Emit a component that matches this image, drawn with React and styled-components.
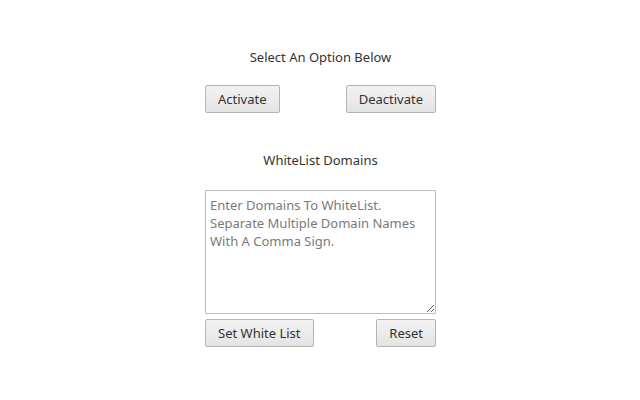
import styled, { createGlobalStyle } from 'styled-components'

const Global = createGlobalStyle`
  html, body {
    margin: 0;
    padding: 0;
    background: #fff;
  }
  body {
    font-family: "Noto Sans", "Open Sans", sans-serif;
    color: #222;
  }
`

const App = () => (
  <>
    <Global />
    <Page>
      <Panel>
        <Heading>Select An Option Below</Heading>
        <ButtonRow>
          <Button>Activate</Button>
          <Button>Deactivate</Button>
        </ButtonRow>
        <Heading $top={37}>WhiteList Domains</Heading>
        <Domains
          placeholder={'Enter Domains To WhiteList.\nSeparate Multiple Domain Names With A Comma Sign.'}
        />
        <ButtonRow $top={5}>
          <Button>Set White List</Button>
          <Button>Reset</Button>
        </ButtonRow>
      </Panel>
    </Page>
  </>
)

export default App

const Page = styled.div`
  width: 640px;
  height: 400px;
  display: flex;
  justify-content: center;
  padding-top: 47px;
  box-sizing: border-box;
`

const Panel = styled.div`
  width: 231px;
  margin-left: 1px;
  display: flex;
  flex-direction: column;
`

const Heading = styled.div`
  text-align: center;
  font-size: 13px;
  line-height: 20px;
  color: #333;
  margin-top: ${(p) => p.$top || 0}px;
`

const ButtonRow = styled.div`
  display: flex;
  justify-content: space-between;
  margin-top: ${(p) => p.$top ?? 18}px;
`

const Button = styled.button`
  height: 28px;
  padding: 0 12px;
  font-family: "Noto Sans", "Open Sans", sans-serif;
  font-size: 13px;
  color: #333;
  background: linear-gradient(#f2f2f2, #e4e4e4);
  border: 1px solid #b4b4b4;
  border-radius: 2px;
`

const Domains = styled.textarea`
  margin-top: 20px;
  height: 124px;
  box-sizing: border-box;
  padding: 5px 4px 3px;
  font-family: "Noto Sans", "Open Sans", sans-serif;
  font-size: 13px;
  line-height: 18px;
  border: 1px solid #bcbcbc;
  border-radius: 1px;
  resize: vertical;
  &::placeholder {
    color: #7a7a7a;
  }
`
